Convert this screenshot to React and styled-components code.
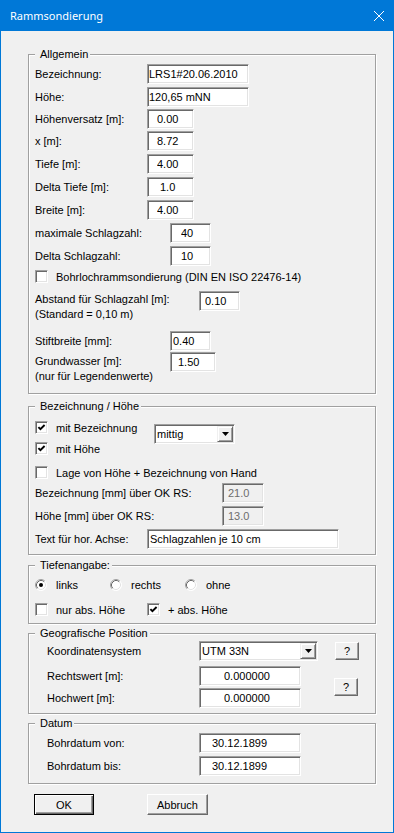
import React from "react";
import styled, { createGlobalStyle } from "styled-components";

const GlobalStyle = createGlobalStyle`
  html, body { margin: 0; padding: 0; background: #f0f0f0; }
  body {
    font-family: "Liberation Sans", Arial, sans-serif;
    font-size: 11px;
    color: #000;
  }
`;

const Window = styled.div`
  width: 394px;
  height: 833px;
  box-sizing: border-box;
  border: 1px solid #0078d7;
  border-top: 0;
  background: #f0f0f0;
  display: flex;
  flex-direction: column;
`;

const TitleBar = styled.div`
  height: 31px;
  flex: none;
  background: #0078d7;
  color: #fff;
  display: flex;
  align-items: center;
  justify-content: space-between;
  padding: 0 9px;
  font-family: "Noto Sans", "Open Sans", sans-serif;
  font-size: 11px;
`;

const Body = styled.div`
  padding: 23px 0 0 27px;
  display: flex;
  flex-direction: column;
`;

const Group = styled.div`
  position: relative;
  box-sizing: border-box;
  width: 348px;
  height: ${(p) => p.$h}px;
  margin-top: ${(p) => p.$mt || 0}px;
  padding: ${(p) => p.$pt}px 0 0 ${(p) => p.$pl || 6}px;
  border: 1px solid #a0a0a0;
  box-shadow: inset 1px 1px 0 #fff, 1px 1px 0 #fff;
  display: flex;
  flex-direction: column;
`;

const Legend = styled.span`
  position: absolute;
  top: -7px;
  left: 6px;
  padding: 0 2px 0 5px;
  line-height: 13px;
  background: #f0f0f0;
  white-space: nowrap;
`;

const Row = styled.div`
  display: flex;
  align-items: ${(p) => p.$align || "center"};
  height: ${(p) => p.$h ?? 20}px;
  margin-top: ${(p) => p.$mt || 0}px;
  flex: none;
`;

const Column = styled.div`
  display: flex;
  flex-direction: column;
  gap: ${(p) => p.$gap || 0}px;
  width: ${(p) => p.$w}px;
  flex: none;
`;

const Label = styled.span`
  width: ${(p) => p.$w}px;
  flex: none;
  white-space: nowrap;
  line-height: ${(p) => p.$lh || 13}px;
  margin-top: ${(p) => p.$mt || 0}px;
`;

const Field = styled.input`
  box-sizing: border-box;
  width: ${(p) => p.$w}px;
  height: 20px;
  flex: none;
  margin: 0;
  padding: 0 0 0 ${(p) => (p.$pl || 2) - 1}px;
  font: inherit;
  color: ${(p) => (p.$off ? "#6d6d6d" : "#000")};
  background: ${(p) => (p.$off ? "#f0f0f0" : "#fff")};
  border: 1px solid;
  border-color: #a0a0a0 #fff #fff #a0a0a0;
  box-shadow: inset 1px 1px 0 #696969, inset -1px -1px 0 #e3e3e3;
  outline: none;
`;

const Option = styled.label`
  display: flex;
  align-items: center;
  gap: ${(p) => p.$gap || 8}px;
  width: ${(p) => (p.$w ? `${p.$w}px` : "auto")};
  height: 13px;
  flex: none;
  white-space: nowrap;
`;

const Box = styled.span`
  width: 13px;
  height: 13px;
  box-sizing: border-box;
  flex: none;
  background: #fff;
  border: 1px solid;
  border-color: #a0a0a0 #fff #fff #a0a0a0;
  box-shadow: inset 1px 1px 0 #696969, inset -1px -1px 0 #e3e3e3;
  display: flex;
  align-items: center;
  justify-content: center;
`;

const ComboBox = styled.div`
  box-sizing: border-box;
  width: ${(p) => p.$w}px;
  height: 20px;
  flex: none;
  margin-top: ${(p) => p.$mt || 0}px;
  padding: 1px 1px 1px 2px;
  background: #fff;
  border: 1px solid;
  border-color: #a0a0a0 #fff #fff #a0a0a0;
  box-shadow: inset 1px 1px 0 #696969, inset -1px -1px 0 #e3e3e3;
  display: flex;
  align-items: center;
  justify-content: space-between;
`;

const ComboArrow = styled.span`
  width: 16px;
  height: 16px;
  box-sizing: border-box;
  background: #f0f0f0;
  border: 1px solid;
  border-color: #f0f0f0 #696969 #696969 #f0f0f0;
  box-shadow: inset 1px 1px 0 #fff, inset -1px -1px 0 #a0a0a0;
  display: flex;
  align-items: center;
  justify-content: center;
`;

const Push = styled.button`
  box-sizing: border-box;
  width: ${(p) => p.$w}px;
  height: ${(p) => p.$h || 21}px;
  margin: 0 0 0 ${(p) => p.$ml || 0}px;
  padding: 0;
  flex: none;
  font: inherit;
  color: #000;
  background: #f0f0f0;
  border: 1px solid;
  border-color: ${(p) =>
    p.$default ? "#000" : "#fff #696969 #696969 #fff"};
  box-shadow: ${(p) =>
    p.$default
      ? "inset 1px 1px 0 #fff, inset -1px -1px 0 #696969, inset -2px -2px 0 #a0a0a0"
      : "inset -1px -1px 0 #a0a0a0"};
`;

const ButtonBar = styled.div`
  display: flex;
  margin-top: 10px;
  padding-left: 6px;
`;

const CheckMark = () => (
  <svg width="9" height="9" viewBox="0 0 9 9">
    <polyline points="1.4,4.2 3.4,6.2 7.6,2" fill="none" stroke="#000" strokeWidth="1.9" />
  </svg>
);

const Check = ({ checked, children, w }) => (
  <Option $w={w}>
    <Box>{checked && <CheckMark />}</Box>
    {children}
  </Option>
);

const Radio = ({ checked, children, w }) => (
  <Option $w={w} $gap={9}>
    <svg width="12" height="12" viewBox="0 0 12 12">
      <circle cx="6" cy="6" r="5.5" fill="#fff" />
      <path d="M2.11 9.89A5.5 5.5 0 0 1 9.89 2.11" fill="none" stroke="#a0a0a0" />
      <path d="M9.89 2.11A5.5 5.5 0 0 1 2.11 9.89" fill="none" stroke="#fff" />
      <path d="M2.82 9.18A4.5 4.5 0 0 1 9.18 2.82" fill="none" stroke="#696969" />
      <path d="M9.18 2.82A4.5 4.5 0 0 1 2.82 9.18" fill="none" stroke="#e3e3e3" />
      {checked && <circle cx="6" cy="6" r="2" fill="#000" />}
    </svg>
    {children}
  </Option>
);

const Combo = ({ value, w, mt }) => (
  <ComboBox $w={w} $mt={mt}>
    <span>{value}</span>
    <ComboArrow>
      <svg width="7" height="4" viewBox="0 0 7 4">
        <polygon points="0,0 7,0 3.5,4" fill="#000" />
      </svg>
    </ComboArrow>
  </ComboBox>
);

const general = [
  { label: "Bezeichnung:", value: "LRS1#20.06.2010", lw: 112, w: 102, pl: 2, mt: 0 },
  { label: "Höhe:", value: "120,65 mNN", lw: 112, w: 102, pl: 2, mt: 3 },
  { label: "Höhenversatz [m]:", value: "0.00", lw: 112, w: 47, pl: 10, mt: 2 },
  { label: "x [m]:", value: "8.72", lw: 112, w: 47, pl: 10, mt: 2 },
  { label: "Tiefe [m]:", value: "4.00", lw: 112, w: 47, pl: 10, mt: 3 },
  { label: "Delta Tiefe [m]:", value: "1.0", lw: 112, w: 47, pl: 13, mt: 3 },
  { label: "Breite [m]:", value: "4.00", lw: 112, w: 47, pl: 10, mt: 3 },
  { label: "maximale Schlagzahl:", value: "40", lw: 135, w: 41, pl: 11, mt: 3 },
  { label: "Delta Schlagzahl:", value: "10", lw: 135, w: 41, pl: 11, mt: 3 },
];

export default function App() {
  return (
    <>
      <GlobalStyle />
      <Window>
        <TitleBar>
          <span>Rammsondierung</span>
          <svg width="10" height="10" viewBox="0 0 10 10">
            <path d="M0 0L10 10M10 0L0 10" stroke="#fff" strokeWidth="1" />
          </svg>
        </TitleBar>

        <Body>
          <Group $h={340} $pt={9}>
            <Legend>Allgemein</Legend>
            {general.map((f) => (
              <Row key={f.label} $mt={f.mt}>
                <Label $w={f.lw}>{f.label}</Label>
                <Field readOnly defaultValue={f.value} $w={f.w} $pl={f.pl} />
              </Row>
            ))}
            <Row $h={13} $mt={4}>
              <Check>Bohrlochrammsondierung (DIN EN ISO 22476-14)</Check>
            </Row>
            <Row $h={30} $mt={8} $align="flex-start">
              <Label $w={164} $lh={15} $mt={1}>
                Abstand für Schlagzahl [m]:
                <br />
                (Standard = 0,10 m)
              </Label>
              <Field readOnly defaultValue="0.10" $w={41} $pl={6} />
            </Row>
            <Row $mt={10}>
              <Label $w={135}>Stiftbreite [mm]:</Label>
              <Field readOnly defaultValue="0.40" $w={41} $pl={3} />
            </Row>
            <Row $h={31} $mt={1} $align="flex-start">
              <Label $w={135} $lh={15} $mt={2}>
                Grundwasser [m]:
                <br />
                (nur für Legendenwerte)
              </Label>
              <Field readOnly defaultValue="1.50" $w={46} $pl={8} />
            </Row>
          </Group>

          <Group $h={149} $mt={12} $pt={14}>
            <Legend>Bezeichnung / Höhe</Legend>
            <Row $h={34} $align="flex-start">
              <Column $w={119} $gap={8}>
                <Check checked>mit Bezeichnung</Check>
                <Check checked>mit Höhe</Check>
              </Column>
              <Combo value="mittig" w={81} mt={3} />
            </Row>
            <Row $h={13} $mt={11}>
              <Check>Lage von Höhe + Bezeichnung von Hand</Check>
            </Row>
            <Row $mt={4}>
              <Label $w={187}>Bezeichnung [mm] über OK RS:</Label>
              <Field readOnly defaultValue="21.0" $w={42} $pl={6} $off />
            </Row>
            <Row $mt={3}>
              <Label $w={187}>Höhe [mm] über OK RS:</Label>
              <Field readOnly defaultValue="13.0" $w={42} $pl={6} $off />
            </Row>
            <Row $mt={3}>
              <Label $w={112}>Text für hor. Achse:</Label>
              <Field readOnly defaultValue="Schlagzahlen je 10 cm" $w={192} $pl={3} />
            </Row>
          </Group>

          <Group $h={59} $mt={10} $pt={13}>
            <Legend>Tiefenangabe:</Legend>
            <Row $h={12}>
              <Radio checked w={75}>links</Radio>
              <Radio w={75}>rechts</Radio>
              <Radio>ohne</Radio>
            </Row>
            <Row $h={13} $mt={12}>
              <Check w={112}>nur abs. Höhe</Check>
              <Check checked>+ abs. Höhe</Check>
            </Row>
          </Group>

          <Group $h={81} $mt={9} $pt={7} $pl={18}>
            <Legend>Geografische Position</Legend>
            <Row>
              <Label $w={152}>Koordinatensystem</Label>
              <Combo value="UTM 33N" w={119} />
              <Push $w={24} $h={18} $ml={17}>?</Push>
            </Row>
            <Row $h={42} $mt={5}>
              <Column $w={254} $gap={2}>
                <Row>
                  <Label $w={152}>Rechtswert [m]:</Label>
                  <Field readOnly defaultValue="0.000000" $w={102} $pl={25} />
                </Row>
                <Row>
                  <Label $w={152}>Hochwert [m]:</Label>
                  <Field readOnly defaultValue="0.000000" $w={102} $pl={25} />
                </Row>
              </Column>
              <Push $w={24} $h={18} $ml={33}>?</Push>
            </Row>
          </Group>

          <Group $h={61} $mt={9} $pt={9} $pl={18}>
            <Legend>Datum</Legend>
            <Row>
              <Label $w={152}>Bohrdatum von:</Label>
              <Field readOnly defaultValue="30.12.1899" $w={102} $pl={13} />
            </Row>
            <Row $mt={3}>
              <Label $w={152}>Bohrdatum bis:</Label>
              <Field readOnly defaultValue="30.12.1899" $w={102} $pl={13} />
            </Row>
          </Group>

          <ButtonBar>
            <Push $default $w={60}>OK</Push>
            <Push $w={61} $ml={53}>Abbruch</Push>
          </ButtonBar>
        </Body>
      </Window>
    </>
  );
}
